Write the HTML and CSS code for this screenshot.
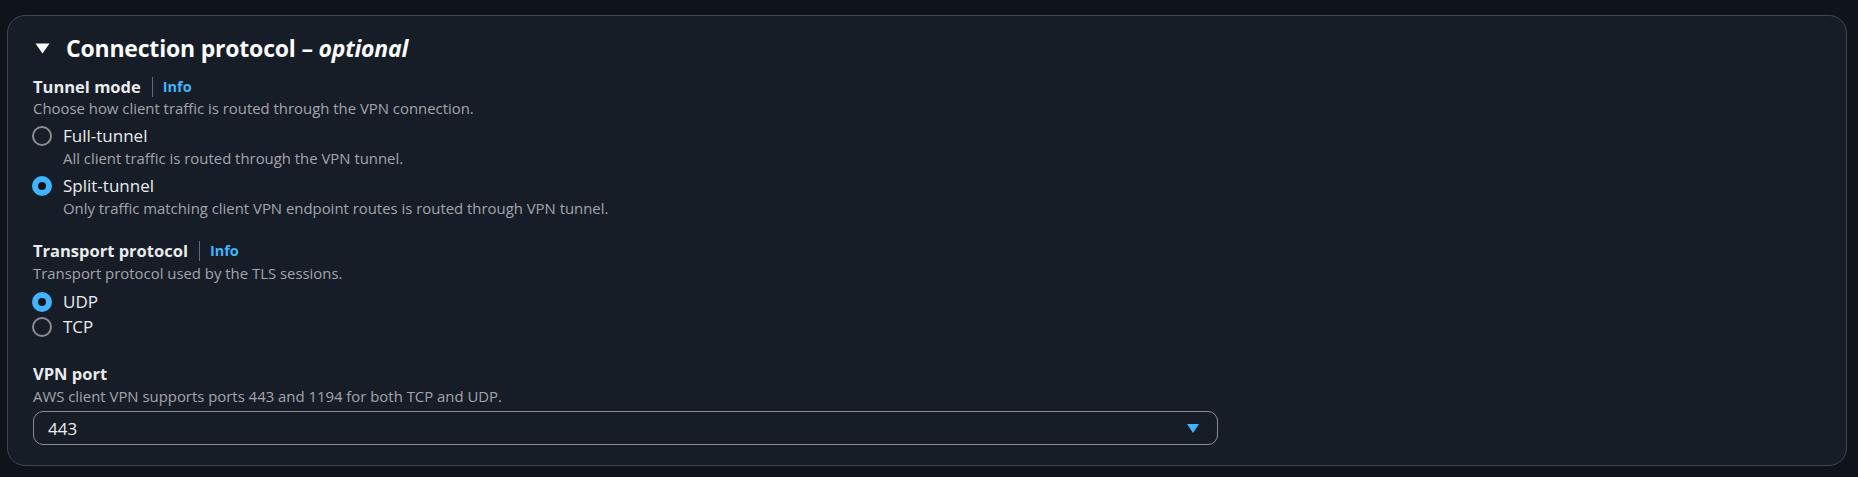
FILE: index.html
```html
<!DOCTYPE html>
<html lang="en">
<head>
<meta charset="utf-8">
<title>Connection protocol</title>
<link rel="stylesheet" href="styles.css">
</head>
<body>
<section class="container">
  <h2 class="heading">
    <svg class="caret" width="15" height="11" viewBox="0 0 15 11"><path d="M0.5 0.5 H14.5 L7.5 10.5 Z" fill="#fbfbfb"/></svg>
    <span>Connection protocol – <em>optional</em></span>
  </h2>

  <div class="field first">
    <div class="label-row"><span class="label">Tunnel mode</span><span class="sep"></span><a class="info">Info</a></div>
    <div class="desc">Choose how client traffic is routed through the VPN connection.</div>
    <div class="radio-group">
      <div class="radio-item">
        <div class="radio-row"><span class="radio"></span><span class="radio-label">Full-tunnel</span></div>
        <div class="radio-desc">All client traffic is routed through the VPN tunnel.</div>
      </div>
      <div class="radio-item">
        <div class="radio-row"><span class="radio checked"></span><span class="radio-label">Split-tunnel</span></div>
        <div class="radio-desc">Only traffic matching client VPN endpoint routes is routed through VPN tunnel.</div>
      </div>
    </div>
  </div>

  <div class="field">
    <div class="label-row"><span class="label">Transport protocol</span><span class="sep"></span><a class="info">Info</a></div>
    <div class="desc">Transport protocol used by the TLS sessions.</div>
    <div class="radio-group compact">
      <div class="radio-item">
        <div class="radio-row"><span class="radio checked"></span><span class="radio-label">UDP</span></div>
      </div>
      <div class="radio-item">
        <div class="radio-row"><span class="radio"></span><span class="radio-label">TCP</span></div>
      </div>
    </div>
  </div>

  <div class="field port">
    <div class="label-row"><span class="label">VPN port</span></div>
    <div class="desc">AWS client VPN supports ports 443 and 1194 for both TCP and UDP.</div>
    <div class="select">
      <span class="select-value">443</span>
      <svg class="select-caret" width="12" height="9" viewBox="0 0 12 9"><path d="M0 0 H12 L6 9 Z" fill="#42b4ff"/></svg>
    </div>
  </div>
</section>
</body>
</html>
```

FILE: styles.css
```css
* { box-sizing: border-box; }
html, body { margin: 0; padding: 0; }
body {
  background: #0f141a;
  font-family: "Open Sans", "Noto Sans", sans-serif;
  color: #dedee3;
  padding: 15px 11px 11px 7px;
}
.container {
  background: #161d26;
  border: 1px solid #424650;
  border-radius: 18px;
  padding: 17px 25px 20px 25px;
  height: 451px;
}
.heading {
  margin: 0;
  display: flex;
  align-items: center;
  font-size: 23px;
  line-height: 30px;
  font-weight: 700;
  color: #fbfbfb;
  letter-spacing: -0.2px;
}
.heading em { font-style: italic; font-weight: 700; }
.caret { margin-left: 2px; margin-right: 16px; flex: none; }
.field { margin-top: 23px; }
.field.first { margin-top: 13px; }
.field.port { margin-top: 25px; }
.label-row { display: flex; align-items: center; height: 22px; }
.label { font-size: 16.5px; font-weight: 700; color: #e9ebed; line-height: 22px; }
.sep { width: 1px; height: 20px; background: #5f6b7a; margin: 0 10px 0 11px; }
.info { font-size: 14.5px; font-weight: 700; color: #42b4ff; line-height: 22px; }
.desc { margin-top: 2px; font-size: 14.9px; line-height: 18px; color: #a4a4ad; }
.field.first .desc { margin-top: 1px; }
.radio-group { margin-top: 8px; display: flex; flex-direction: column; gap: 8px; }
.radio-group.compact { margin-top: 9px; gap: 3px; }
.radio-row { display: flex; align-items: center; height: 22px; }
.radio {
  width: 20px; height: 20px; border-radius: 50%;
  border: 2px solid #8c8c94;
  margin-left: -1px;
  margin-right: 11px;
  flex: none;
}
.radio.checked {
  border: 6px solid #42b4ff;
  background: #0f141a;
}
.radio-label { font-size: 17px; line-height: 22px; color: #e9ebed; }
.radio-desc { margin-top: 2px; padding-left: 30px; font-size: 14.9px; line-height: 18px; color: #a4a4ad; }
.select {
  margin-top: 6px;
  width: 1185px;
  height: 34px;
  border: 1px solid #8c8c94;
  border-radius: 10px;
  display: flex;
  align-items: center;
  justify-content: space-between;
  padding: 0 18px 0 14px;
}
.select-value { font-size: 17px; color: #e9ebed; }
```
